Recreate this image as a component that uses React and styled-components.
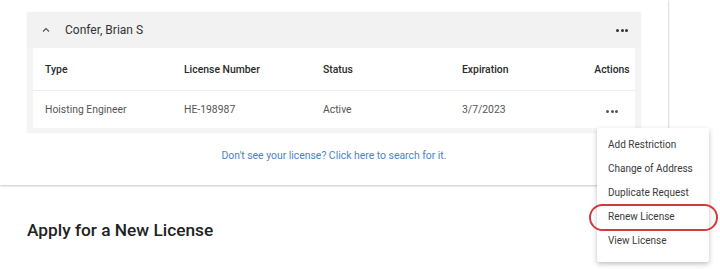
import React from 'react';
import styled, { createGlobalStyle } from 'styled-components';

const GlobalStyle = createGlobalStyle`
  body {
    margin: 0;
    background: #ffffff;
    font-family: Roboto, 'Liberation Sans', sans-serif;
    color: #333;
  }
`;

const Page = styled.div`
  position: relative;
  width: 720px;
  height: 269px;
  overflow: hidden;
`;

const Card = styled.section`
  width: 668px;
  height: 185px;
  box-sizing: border-box;
  padding: 12px 27px 0;
  background: #fff;
  box-shadow: 0 1px 2px rgba(0, 0, 0, 0.22), 1px 0 1px rgba(0, 0, 0, 0.05);
  display: flex;
  flex-direction: column;
`;

const Accordion = styled.div`
  background: #f4f4f4;
  width: 614px;
  padding-bottom: 5px;
  box-shadow: 0 0 1px rgba(0, 0, 0, 0.08);
`;

const AccordionHeader = styled.div`
  height: 36px;
  display: flex;
  align-items: center;
  padding: 0 13px 0 14px;
  background: #f2f2f2;
`;

const Chevron = styled.svg`
  width: 10px;
  height: 10px;
  margin-right: 14px;
`;

const Name = styled.span`
  flex: 1;
  font-size: 12px;
  color: #333;
`;

const Dots = styled.span`
  display: inline-flex;
  gap: 1.5px;
  span {
    width: 3px;
    height: 3px;
    border-radius: 50%;
    background: ${(p) => (p.$light ? '#555' : '#333')};
  }
`;

const Table = styled.div`
  background: #fff;
  margin: 0 6px;
`;

const Row = styled.div`
  display: grid;
  grid-template-columns: 139px 139px 139px 1fr 36px;
  align-items: center;
  height: ${(p) => (p.$head ? '42px' : '37px')};
  padding: 0 5px 0 12px;
  border-bottom: ${(p) => (p.$head ? '1px solid #ececec' : 'none')};
  font-size: 10.4px;
  font-weight: ${(p) => (p.$head ? 500 : 400)};
  color: ${(p) => (p.$head ? '#2a2a2a' : '#555')};
`;

const Cell = styled.div`
  justify-self: ${(p) => (p.$center ? 'center' : 'start')};
  white-space: nowrap;
`;

const LinkRow = styled.div`
  text-align: center;
  margin-top: 16px;
  font-size: 10.4px;
  color: #4a84c6;
`;

const Heading = styled.h2`
  margin: 35px 0 0 27px;
  font-size: 17.3px;
  font-weight: 500;
  color: #222;
`;

const Menu = styled.ul`
  position: absolute;
  left: 597px;
  top: 128px;
  width: 112px;
  margin: 0;
  padding: 5px 0 0;
  height: 134px;
  box-sizing: border-box;
  list-style: none;
  background: #fff;
  border-radius: 2px;
  box-shadow: 0 2px 5px rgba(0, 0, 0, 0.25);
`;

const MenuItem = styled.li`
  height: 24px;
  line-height: 24px;
  padding-left: 11px;
  font-size: 10px;
  color: #3a3a3a;
  white-space: nowrap;
`;

const Highlight = styled.div`
  position: absolute;
  left: 589px;
  top: 204px;
  width: 125px;
  height: 23px;
  border: 2px solid #d23a3e;
  border-radius: 14px;
`;

const Ellipsis = ({ light }) => (
  <Dots $light={light}>
    <span />
    <span />
    <span />
  </Dots>
);

const menuItems = ['Add Restriction', 'Change of Address', 'Duplicate Request', 'Renew License', 'View License'];

export default function App() {
  return (
    <Page>
      <GlobalStyle />
      <Card>
        <Accordion>
          <AccordionHeader>
            <Chevron viewBox="0 0 10 10">
              <path d="M2 6.5 L5 3.5 L8 6.5" fill="none" stroke="#555" strokeWidth="1.2" />
            </Chevron>
            <Name>Confer, Brian S</Name>
            <Ellipsis />
          </AccordionHeader>
          <Table>
            <Row $head>
              <Cell>Type</Cell>
              <Cell>License Number</Cell>
              <Cell>Status</Cell>
              <Cell>Expiration</Cell>
              <Cell $center>Actions</Cell>
            </Row>
            <Row>
              <Cell>Hoisting Engineer</Cell>
              <Cell>HE-198987</Cell>
              <Cell>Active</Cell>
              <Cell>3/7/2023</Cell>
              <Cell $center>
                <Ellipsis light />
              </Cell>
            </Row>
          </Table>
        </Accordion>
        <LinkRow>Don't see your license? Click here to search for it.</LinkRow>
      </Card>
      <Heading>Apply for a New License</Heading>
      <Menu>
        {menuItems.map((item) => (
          <MenuItem key={item}>{item}</MenuItem>
        ))}
      </Menu>
      <Highlight />
    </Page>
  );
}
